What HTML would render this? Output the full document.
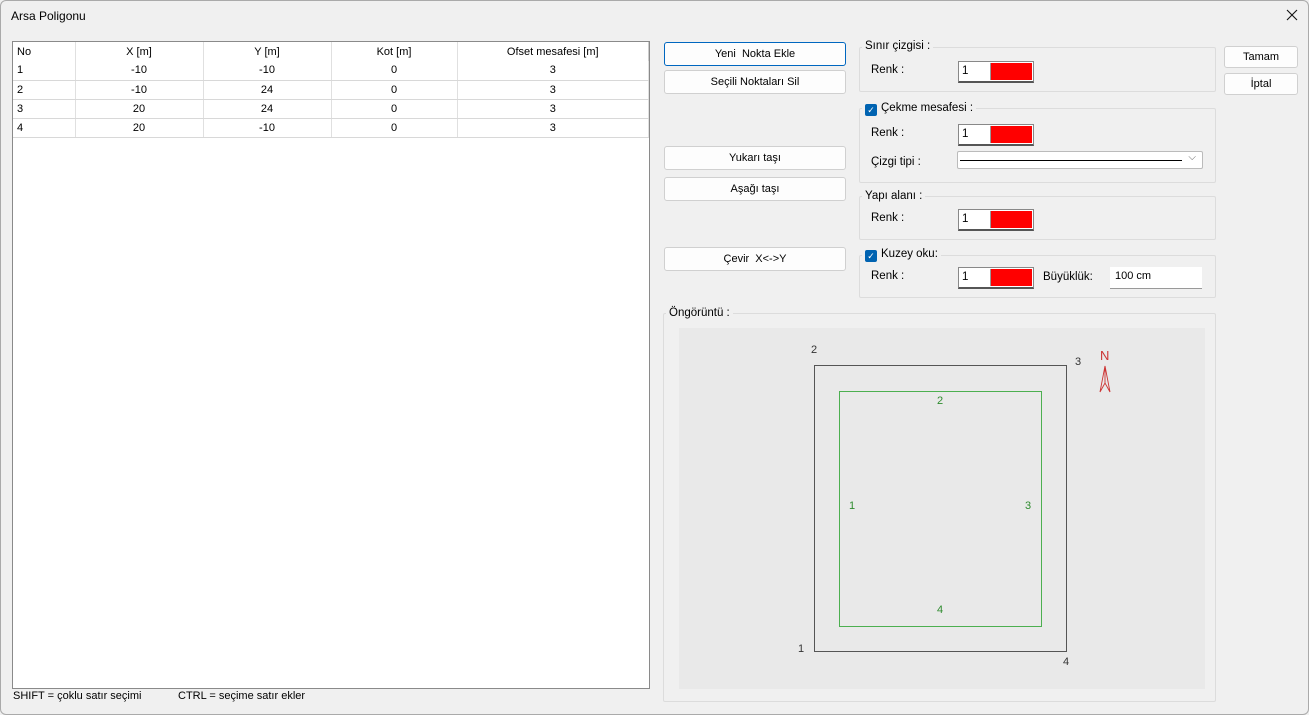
<!DOCTYPE html>
<html><head><meta charset="utf-8"><style>
*{box-sizing:border-box}
body{margin:0;width:1309px;height:715px;background:#f0f0f0;font-family:"Liberation Sans",sans-serif;font-size:11.5px;color:#000;position:relative;overflow:hidden}
.a{position:absolute}
.btn{position:absolute;background:#fdfdfd;border:1px solid #d0d0d0;border-radius:3px;text-align:center;line-height:22px;font-size:11px}
.grp{position:absolute;border:1px solid #dcdcdc;border-radius:2px}
.lbl{position:absolute;background:#f0f0f0;padding:0 3px;font-size:11.5px}
.clr{position:absolute;width:76px;height:22px;border:1px solid #888;border-bottom:2px solid #555;background:#fff}
.clr span{position:absolute;left:3px;top:3px;font-size:11.5px}
.clr i{position:absolute;left:31px;top:1px;width:42px;height:17px;background:#f00;border-left:1px solid #999}
.cb{display:inline-block;width:12px;height:12px;background:#0063b1;border-radius:2px;vertical-align:-2px;margin-right:4px;color:#fff;font-size:9px;line-height:12px;text-align:center}
table{border-collapse:collapse;font-size:11px}
td{height:19px;border-bottom:1px solid #d8d8d8;border-right:1px solid #e0e0e0;text-align:center;padding:0}
td:first-child{text-align:left;padding-left:4px}
</style></head><body>
<div class="a" style="left:0;top:0;width:1309px;height:715px;border:1px solid #aaa;border-radius:6px"></div>
<div class="a" style="left:11px;top:9px;font-size:12px">Arsa Poligonu</div>
<svg class="a" style="left:1286px;top:9px" width="12" height="12"><path d="M1 1L11 11M11 1L1 11" stroke="#111" stroke-width="1.1"/></svg>

<div class="a" style="left:12px;top:41px;width:638px;height:648px;background:#fff;border:1px solid #8a8a8a">
<table style="width:636px">
<tr><td style="width:62px;border-bottom:none">No</td><td style="width:128px;border-bottom:none">X [m]</td><td style="width:128px;border-bottom:none">Y [m]</td><td style="width:126px;border-bottom:none">Kot [m]</td><td style="border-bottom:none;border-right:1px solid #ccc">Ofset mesafesi [m]</td></tr>
<tr><td>1</td><td>-10</td><td>-10</td><td>0</td><td>3</td></tr>
<tr><td>2</td><td>-10</td><td>24</td><td>0</td><td>3</td></tr>
<tr><td>3</td><td>20</td><td>24</td><td>0</td><td>3</td></tr>
<tr><td>4</td><td>20</td><td>-10</td><td>0</td><td>3</td></tr>
</table></div>
<div class="a" style="left:13px;top:690px;font-size:11px">SHIFT = çoklu satır seçimi</div>
<div class="a" style="left:178px;top:690px;font-size:11px">CTRL = seçime satır ekler</div>

<div class="btn" style="left:664px;top:42px;width:182px;height:24px;border-color:#0067c0">Yeni&nbsp; Nokta Ekle</div>
<div class="btn" style="left:664px;top:70px;width:182px;height:24px">Seçili Noktaları Sil</div>
<div class="btn" style="left:664px;top:146px;width:182px;height:24px">Yukarı taşı</div>
<div class="btn" style="left:664px;top:177px;width:182px;height:24px">Aşağı taşı</div>
<div class="btn" style="left:664px;top:247px;width:182px;height:24px">Çevir&nbsp; X&lt;-&gt;Y</div>
<div class="btn" style="left:1224px;top:46px;width:74px;height:22px;line-height:20px">Tamam</div>
<div class="btn" style="left:1224px;top:73px;width:74px;height:22px;line-height:20px">İptal</div>

<div class="grp" style="left:859px;top:47px;width:357px;height:45px"></div>
<div class="lbl" style="left:862px;top:40px">Sınır çizgisi :</div>
<div class="a" style="left:871px;top:64px">Renk :</div>
<div class="clr" style="left:958px;top:61px"><span>1</span><i></i></div>

<div class="grp" style="left:859px;top:108px;width:357px;height:75px"></div>
<div class="lbl" style="left:862px;top:102px"><span class="cb">✓</span>Çekme mesafesi :</div>
<div class="a" style="left:871px;top:127px">Renk :</div>
<div class="clr" style="left:958px;top:124px"><span>1</span><i></i></div>
<div class="a" style="left:871px;top:156px">Çizgi tipi :</div>
<div class="a" style="left:957px;top:151px;width:246px;height:18px;background:#fff;border:1px solid #bbb;border-radius:2px"><div class="a" style="left:2px;top:8px;width:222px;height:1px;background:#000"></div><div class="a" style="right:6px;top:0;font-size:10px;color:#666">⌵</div></div>

<div class="grp" style="left:859px;top:196px;width:357px;height:44px"></div>
<div class="lbl" style="left:862px;top:190px">Yapı alanı :</div>
<div class="a" style="left:871px;top:212px">Renk :</div>
<div class="clr" style="left:958px;top:209px"><span>1</span><i></i></div>

<div class="grp" style="left:859px;top:255px;width:357px;height:43px"></div>
<div class="lbl" style="left:862px;top:248px"><span class="cb">✓</span>Kuzey oku:</div>
<div class="a" style="left:871px;top:270px">Renk :</div>
<div class="clr" style="left:958px;top:267px"><span>1</span><i></i></div>
<div class="a" style="left:1043px;top:271px">Büyüklük:</div>
<div class="a" style="left:1110px;top:267px;width:92px;height:22px;background:#fff;border-bottom:1px solid #999;padding:3px 5px;font-size:11px">100 cm</div>

<div class="grp" style="left:663px;top:313px;width:553px;height:389px"></div>
<div class="lbl" style="left:666px;top:307px">Öngörüntü :</div>
<svg class="a" style="left:679px;top:328px" width="526" height="361">
<rect width="526" height="361" fill="#e9e9e9"/>
<rect x="135.5" y="37.5" width="252" height="286" fill="none" stroke="#555"/>
<rect x="160.5" y="63.5" width="202" height="235" fill="none" stroke="#4caf50"/>
<g font-family="Liberation Sans" font-size="11" fill="#333">
<text x="132" y="25">2</text><text x="396" y="37">3</text><text x="119" y="324">1</text><text x="384" y="337">4</text></g>
<g font-family="Liberation Sans" font-size="11" fill="#2e8b2e">
<text x="258" y="76">2</text><text x="170" y="181">1</text><text x="346" y="181">3</text><text x="258" y="285">4</text></g>
<text x="421" y="32" font-family="Liberation Sans" font-size="13" fill="#c33">N</text>
<path d="M426 38 L421 64 L426 55 L431 64 Z M426 38 L426 55" fill="none" stroke="#c33" stroke-width="0.9"/>
</svg>
</body></html>
